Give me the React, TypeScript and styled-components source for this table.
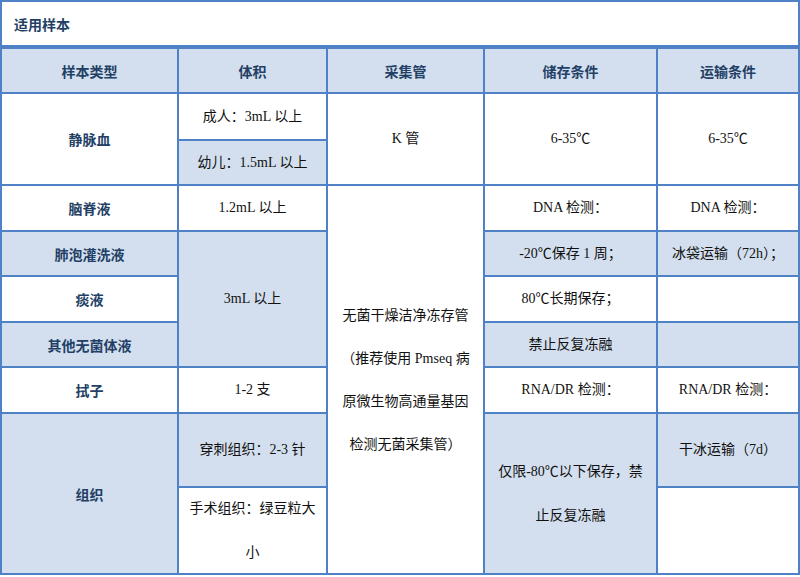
import { createGlobalStyle, styled } from 'styled-components';
import { Fragment } from 'react';

const BLUE = '#4f81c7';
const SHADE = '#d3dfee';
const NAVY = '#233f66';

const GlobalStyle = createGlobalStyle`
  html, body {
    margin: 0;
    padding: 0;
    background: #fff;
  }
  body {
    font-family: "Liberation Serif", "Noto Sans CJK SC", serif;
  }
`;

const Panel = styled.div`
  width: 800px;
  box-sizing: border-box;
  border: 2px solid ${BLUE};
`;

const Title = styled.div`
  height: 43px;
  padding-left: 12px;
  display: flex;
  align-items: center;
  border-bottom: 4px solid ${BLUE};
  font-family: "Noto Sans CJK SC", sans-serif;
  font-weight: 700;
  font-size: 14px;
  color: ${NAVY};
`;

const Grid = styled.div`
  display: grid;
  grid-template-columns: 175px 147px 155px 171px 140px;
  grid-template-rows: 43px 45px 43px 44px 43px 44px 43px 44px 72px 85px;
  gap: 2px;
  background: ${BLUE};
`;

type Kind = 'head' | 'label' | 'body';

const Cell = styled.div<{ $row: string; $col: number; $shaded?: boolean; $kind: Kind; $lh: number }>`
  grid-row: ${({ $row }) => $row};
  grid-column: ${({ $col }) => $col};
  background: ${({ $shaded }) => ($shaded ? SHADE : '#fff')};
  display: flex;
  align-items: center;
  justify-content: center;
  text-align: center;
  white-space: nowrap;
  font-size: 14px;
  line-height: ${({ $lh }) => $lh}px;
  font-family: ${({ $kind }) =>
    $kind === 'body'
      ? '"Liberation Serif", "Noto Sans CJK SC", serif'
      : '"Noto Sans CJK SC", sans-serif'};
  font-weight: ${({ $kind }) => ($kind === 'body' ? 400 : 700)};
  color: ${({ $kind }) => ($kind === 'body' ? '#111' : NAVY)};
`;

interface CellData {
  row: string;
  col: number;
  text: string;
  kind?: Kind;
  shaded?: boolean;
  lh?: number;
}

const cells: CellData[] = [
  { row: '1', col: 1, text: '样本类型', kind: 'head', shaded: true },
  { row: '1', col: 2, text: '体积', kind: 'head', shaded: true },
  { row: '1', col: 3, text: '采集管', kind: 'head', shaded: true },
  { row: '1', col: 4, text: '储存条件', kind: 'head', shaded: true },
  { row: '1', col: 5, text: '运输条件', kind: 'head', shaded: true },

  { row: '2 / 4', col: 1, text: '静脉血', kind: 'label' },
  { row: '2', col: 2, text: '成人：3mL 以上' },
  { row: '3', col: 2, text: '幼儿：1.5mL 以上', shaded: true },
  { row: '2 / 4', col: 3, text: 'K 管' },
  { row: '2 / 4', col: 4, text: '6-35℃' },
  { row: '2 / 4', col: 5, text: '6-35℃' },

  { row: '4', col: 1, text: '脑脊液', kind: 'label' },
  { row: '4', col: 2, text: '1.2mL 以上' },
  {
    row: '4 / 11',
    col: 3,
    text: '无菌干燥洁净冻存管\n（推荐使用 Pmseq 病\n原微生物高通量基因\n检测无菌采集管）',
    lh: 43,
  },
  { row: '4', col: 4, text: 'DNA 检测：' },
  { row: '4', col: 5, text: 'DNA 检测：' },

  { row: '5', col: 1, text: '肺泡灌洗液', kind: 'label', shaded: true },
  { row: '5 / 8', col: 2, text: '3mL 以上', shaded: true },
  { row: '5', col: 4, text: '-20℃保存 1 周；', shaded: true },
  { row: '5', col: 5, text: '冰袋运输（72h）；', shaded: true },

  { row: '6', col: 1, text: '痰液', kind: 'label' },
  { row: '6', col: 4, text: '80℃长期保存；' },
  { row: '6', col: 5, text: '' },

  { row: '7', col: 1, text: '其他无菌体液', kind: 'label', shaded: true },
  { row: '7', col: 4, text: '禁止反复冻融', shaded: true },
  { row: '7', col: 5, text: '', shaded: true },

  { row: '8', col: 1, text: '拭子', kind: 'label' },
  { row: '8', col: 2, text: '1-2 支' },
  { row: '8', col: 4, text: 'RNA/DR 检测：' },
  { row: '8', col: 5, text: 'RNA/DR 检测：' },

  { row: '9 / 11', col: 1, text: '组织', kind: 'label', shaded: true },
  { row: '9', col: 2, text: '穿刺组织：2-3 针', shaded: true },
  { row: '10', col: 2, text: '手术组织：绿豆粒大\n小', lh: 44 },
  { row: '9 / 11', col: 4, text: '仅限-80℃以下保存，禁\n止反复冻融', shaded: true, lh: 44 },
  { row: '9', col: 5, text: '干冰运输（7d）', shaded: true },
  { row: '10', col: 5, text: '' },
];

const renderText = (text: string) =>
  text.split('\n').map((line, i) => (
    <Fragment key={i}>
      {i > 0 && <br />}
      {line}
    </Fragment>
  ));

const App = () => (
  <>
    <GlobalStyle />
    <Panel>
      <Title>适用样本</Title>
      <Grid>
        {cells.map((c) => (
          <Cell
            key={`${c.row}-${c.col}`}
            $row={c.row}
            $col={c.col}
            $shaded={c.shaded}
            $kind={c.kind ?? 'body'}
            $lh={c.lh ?? 20}
          >
            <div>{renderText(c.text)}</div>
          </Cell>
        ))}
      </Grid>
    </Panel>
  </>
);

export default App;
